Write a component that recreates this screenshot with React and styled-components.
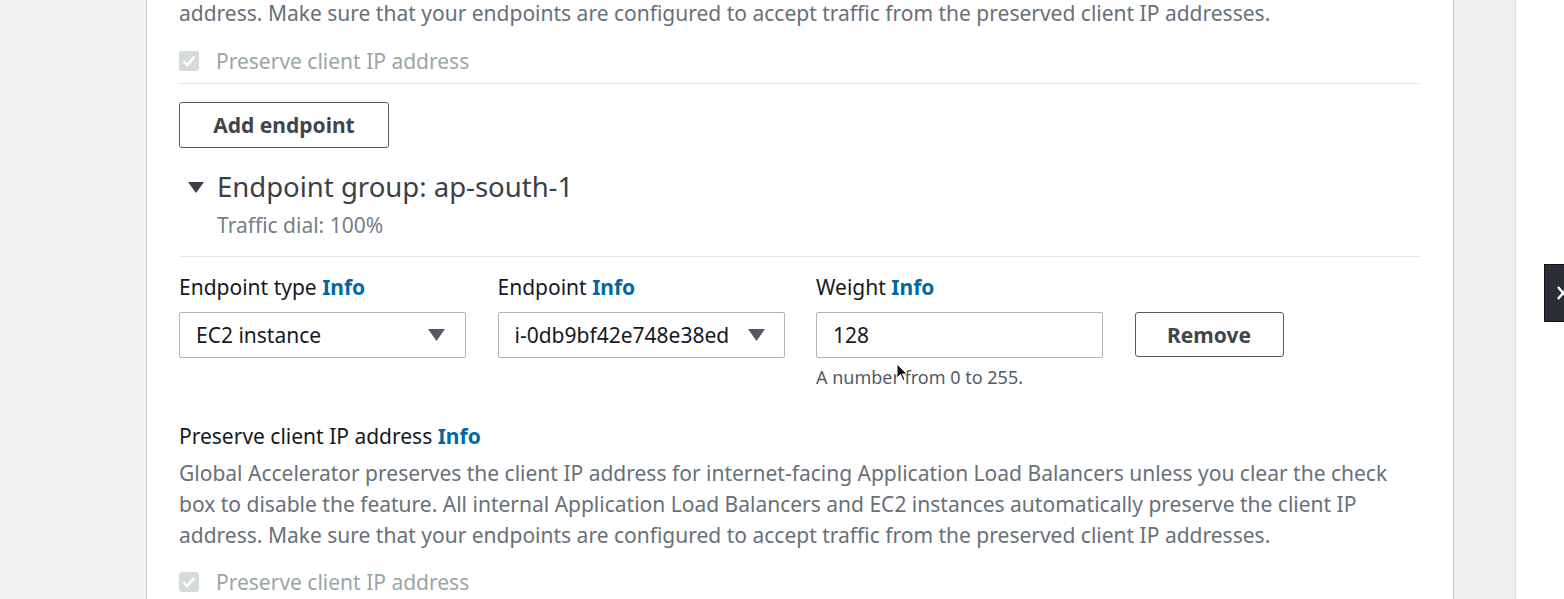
import React from "react";
import styled, { createGlobalStyle } from "styled-components";

const GlobalStyle = createGlobalStyle`
  html, body {
    margin: 0;
    padding: 0;
    height: 599px;
    overflow: hidden;
    background: #ffffff;
    font-family: "Noto Sans", "Open Sans", Arial, sans-serif;
  }
`;

const Page = styled.div`
  display: flex;
  height: 599px;
  position: relative;
  overflow: hidden;
`;

const Gutter = styled.div`
  width: 146px;
  flex-shrink: 0;
  background: #f2f2f2;
  border-right: 1px solid #d0d4d4;
`;

const Panel = styled.div`
  width: 1241px;
  flex-shrink: 0;
  padding: 0 33px 0 32px;
  background: #ffffff;
  overflow: hidden;
`;

const SideStrip = styled.div`
  width: 61px;
  flex-shrink: 0;
  background: #f0f0f0;
  border-left: 1px solid #c9c9c9;
  border-right: 1px solid #dedede;
`;

const RightArea = styled.div`
  flex: 1;
  display: flex;
  flex-direction: column;
  align-items: flex-start;
  padding: 264px 0 0 28px;
  overflow: hidden;
`;

const DarkTab = styled.div`
  width: 40px;
  height: 58px;
  flex-shrink: 0;
  background: #2b2e33;
  border: 1px solid #101418;
  display: flex;
  align-items: center;
  padding-left: 11px;
  box-sizing: border-box;
`;

const Description = styled.p`
  margin: ${(p) => p.$top || 0}px 0 0;
  font-size: 21px;
  line-height: 31px;
  color: #687078;
  white-space: nowrap;
`;

const CheckRow = styled.label`
  display: flex;
  align-items: center;
  gap: 17px;
  height: 30px;
  margin-top: ${(p) => p.$top}px;
  font-size: 21px;
  color: #9aa6a6;
`;

const CheckBox = styled.span`
  width: 20px;
  height: 20px;
  border-radius: 3px;
  background: #d5dbdb;
  display: flex;
  align-items: center;
  justify-content: center;
`;

const Divider = styled.div`
  height: 1px;
  background: #e6e9e9;
  margin-top: ${(p) => p.$top}px;
`;

const Button = styled.button`
  height: ${(p) => p.$h || 46}px;
  width: ${(p) => p.$w}px;
  margin-top: ${(p) => p.$top || 0}px;
  background: #ffffff;
  border: 1px solid #545b64;
  border-radius: 3px;
  font-family: inherit;
  font-size: 21px;
  font-weight: 700;
  color: #3f454d;
  padding: 0;
  cursor: pointer;
`;

const GroupHeader = styled.div`
  display: flex;
  align-items: center;
  gap: 13px;
  margin: 22px 0 0 9px;
`;

const GroupTitle = styled.h2`
  margin: 0;
  font-size: 27.5px;
  font-weight: 400;
  line-height: 34px;
  color: #3b4048;
`;

const SubText = styled.div`
  margin: 7px 0 0 38px;
  font-size: 21px;
  line-height: 28px;
  color: #74808a;
`;

const FieldGrid = styled.div`
  display: grid;
  grid-template-columns: 287px 287px 287px auto;
  column-gap: 31.5px;
  align-items: start;
  margin-top: 16px;
`;

const Label = styled.div`
  font-size: 21px;
  line-height: 28px;
  color: #16191f;
  margin-top: ${(p) => p.$top || 0}px;
`;

const Info = styled.span`
  color: #0067a7;
  font-weight: 700;
`;

const Control = styled.div`
  margin-top: 11px;
  height: 46px;
  box-sizing: border-box;
  border: 1px solid #aab7b8;
  border-radius: 2px;
  display: flex;
  align-items: center;
  justify-content: space-between;
  padding: 0 ${(p) => p.$right || 20}px 0 16px;
  font-size: 21px;
  color: #16191f;
  white-space: nowrap;
  overflow: hidden;
`;

const Hint = styled.div`
  grid-column: 3;
  margin-top: 7px;
  font-size: 18px;
  line-height: 24px;
  color: #545b64;
`;

const Cursor = styled.svg`
  position: absolute;
  left: 896px;
  top: 363px;
`;

const Caret = () => (
  <svg width="17" height="12" viewBox="0 0 17 12" style={{ flexShrink: 0 }}>
    <path d="M0 0 H17 L8.5 12 Z" fill="#545b64" />
  </svg>
);

const Check = () => (
  <svg width="14" height="12" viewBox="0 0 14 12">
    <path d="M1.5 6.5 L5.2 10 L12.5 1.8" fill="none" stroke="#ffffff" strokeWidth="2.4" />
  </svg>
);

const longText =
  "address. Make sure that your endpoints are configured to accept traffic from the preserved client IP addresses.";

export default function App() {
  return (
    <>
      <GlobalStyle />
      <Page>
        <Gutter />
        <Panel>
          <Description $top={-2}>{longText}</Description>
          <CheckRow $top={17}>
            <CheckBox>
              <Check />
            </CheckBox>
            Preserve client IP address
          </CheckRow>
          <Divider $top={7} />
          <Button $w={210} $top={18}>Add endpoint</Button>

          <GroupHeader>
            <svg width="16" height="11" viewBox="0 0 16 11">
              <path d="M0 0 H16 L8 11 Z" fill="#3b4048" />
            </svg>
            <GroupTitle>Endpoint group: ap-south-1</GroupTitle>
          </GroupHeader>
          <SubText>Traffic dial: 100%</SubText>
          <Divider $top={17} />

          <FieldGrid>
            <Label>
              Endpoint type <Info>Info</Info>
            </Label>
            <Label>
              Endpoint <Info>Info</Info>
            </Label>
            <Label>
              Weight <Info>Info</Info>
            </Label>
            <div />
            <Control>
              EC2 instance
              <Caret />
            </Control>
            <Control $right={19}>
              i-0db9bf42e748e38ed
              <Caret />
            </Control>
            <Control>128</Control>
            <Button $w={149} $h={45} style={{ marginTop: 11 }}>
              Remove
            </Button>
            <Hint>A number from 0 to 255.</Hint>
          </FieldGrid>

          <Label $top={33}>
            Preserve client IP address <Info>Info</Info>
          </Label>
          <Description $top={8}>
            Global Accelerator preserves the client IP address for internet-facing Application Load Balancers unless you clear the check
            <br />
            box to disable the feature. All internal Application Load Balancers and EC2 instances automatically preserve the client IP
            <br />
            {longText}
          </Description>
          <CheckRow $top={16}>
            <CheckBox>
              <Check />
            </CheckBox>
            Preserve client IP address
          </CheckRow>
        </Panel>
        <SideStrip />
        <RightArea>
          <DarkTab>
            <svg width="14" height="16" viewBox="0 0 14 16">
              <path d="M2 2 L12 14 M12 2 L2 14" stroke="#ffffff" strokeWidth="2.4" />
            </svg>
          </DarkTab>
        </RightArea>
        <Cursor width="12" height="19" viewBox="0 0 12 19">
          <path d="M1 1 L1 15 L4.5 11.5 L7 17.5 L9 16.6 L6.6 11 L11 11 Z" fill="#111" stroke="#fff" strokeWidth="1" />
        </Cursor>
      </Page>
    </>
  );
}
